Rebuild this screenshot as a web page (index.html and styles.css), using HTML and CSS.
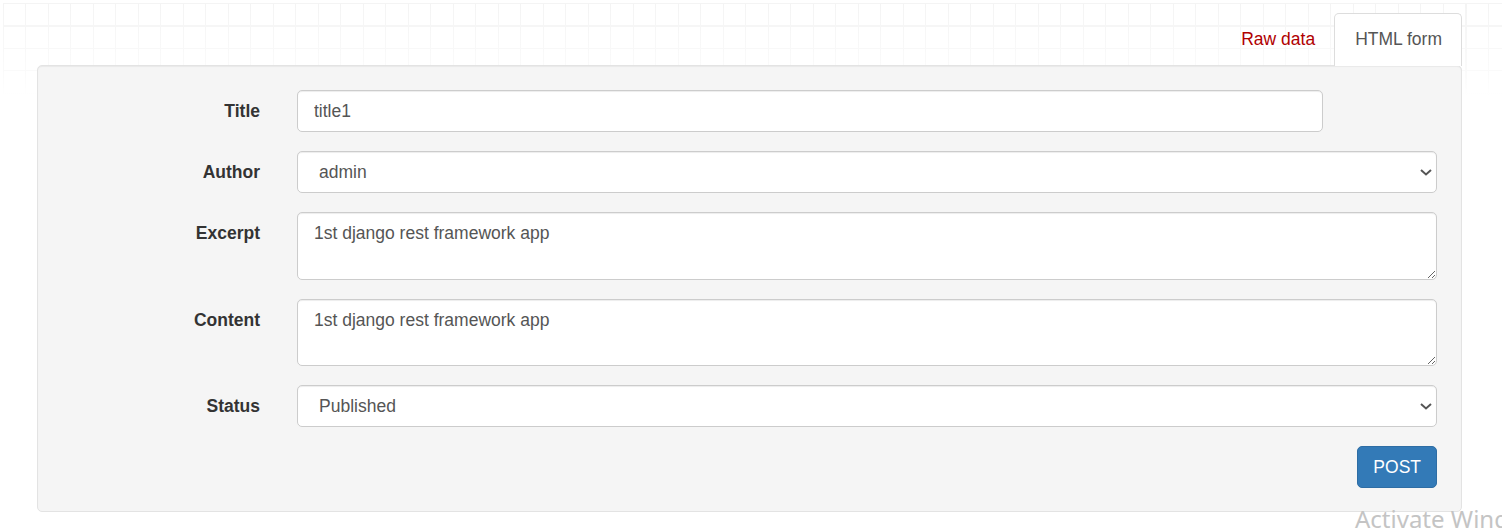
FILE: index.html
```html
<!DOCTYPE html>
<html lang="en">

<head>
  <meta charset="UTF-8">
  <meta name="viewport" content="width=device-width, initial-scale=1.0">
  <title>Post List – Django REST framework</title>
  <link rel="stylesheet" href="styles.css">
</head>

<body>
  <div class="page">
    <!-- Abas do formulário -->
    <ul class="tabs">
      <li class="tab tab-raw"><a href="#">Raw data</a></li>
      <li class="tab active"><a href="#">HTML form</a></li>
    </ul>

    <div class="well">
      <form class="form">
        <div class="form-row">
          <label for="title">Title</label>
          <div class="field">
            <input type="text" id="title" class="control control-short" value="title1">
          </div>
        </div>

        <div class="form-row">
          <label for="author">Author</label>
          <div class="field field-select">
            <select id="author" class="control">
              <option>admin</option>
            </select>
            <svg class="chevron" width="12" height="7" viewBox="0 0 12 7">
              <path d="M1 1 L6 5.5 L11 1" fill="none" stroke="#555" stroke-width="2" />
            </svg>
          </div>
        </div>

        <div class="form-row">
          <label for="excerpt">Excerpt</label>
          <div class="field">
            <textarea id="excerpt" class="control control-area">1st django rest framework app</textarea>
          </div>
        </div>

        <div class="form-row">
          <label for="content">Content</label>
          <div class="field">
            <textarea id="content" class="control control-area">1st django rest framework app</textarea>
          </div>
        </div>

        <div class="form-row">
          <label for="status">Status</label>
          <div class="field field-select">
            <select id="status" class="control">
              <option>Published</option>
              <option>Draft</option>
            </select>
            <svg class="chevron" width="12" height="7" viewBox="0 0 12 7">
              <path d="M1 1 L6 5.5 L11 1" fill="none" stroke="#555" stroke-width="2" />
            </svg>
          </div>
        </div>

        <div class="actions">
          <button type="button" class="btn-post">POST</button>
        </div>
      </form>
    </div>
  </div>

  <div class="watermark">Activate Windows</div>
</body>

</html>
```

FILE: styles.css
```css
/* Página base */
html,
body {
  height: 100%;
  overflow: hidden;
}

body {
  margin: 0;
  font-family: "Liberation Sans", Arial, sans-serif;
  font-size: 17.5px;
  line-height: 25px;
  color: #333;
  background-color: #fff;
  /* grade bem clarinha no topo, como o grid.png do DRF */
  background-image:
    linear-gradient(to bottom, rgba(255, 255, 255, 0) 0, rgba(255, 255, 255, 0.6) 70px, #fff 93px),
    repeating-linear-gradient(to right, #f4f4f4 0, #f4f4f4 1px, transparent 1px, transparent 22.5px),
    repeating-linear-gradient(to bottom, #f4f4f4 0, #f4f4f4 1px, transparent 1px, transparent 22.5px);
  background-size: 100% 93px;
  background-repeat: no-repeat;
  background-position: 3px 3px;
}

.page {
  padding: 13px 40px 0 37px;
}

/* Abas */
.tabs {
  display: flex;
  justify-content: flex-end;
  list-style: none;
  margin: 0 0 -1px;
  padding: 0;
}

.tab {
  position: relative;
  z-index: 1;
  margin-left: 2px;
}

.tab a {
  display: block;
  padding: 13px 19px 14px 20px;
  border: 1px solid transparent;
  border-bottom: none;
  border-radius: 5px 5px 0 0;
  color: #b00000;
  text-decoration: none;
}

.tab-raw a {
  padding-right: 16px;
}

.tab.active a {
  background-color: #fff;
  border-color: #ddd;
  color: #555;
}

/* Caixa cinza do formulário */
.well {
  background-color: #f5f5f5;
  border: 1px solid #e3e3e3;
  border-radius: 5px;
  box-shadow: inset 0 1px 1px rgba(0, 0, 0, 0.05);
  padding: 24px 24px 23px 0;
}

.form-row {
  display: grid;
  grid-template-columns: 222px 1fr;
  column-gap: 37px;
  margin-bottom: 19px;
}

.form-row label {
  text-align: right;
  font-weight: bold;
  padding-top: 9px;
}

.field-select {
  position: relative;
}

.control {
  display: block;
  box-sizing: border-box;
  width: 100%;
  height: 42px;
  padding: 7px 15px 7px 16px;
  font-family: inherit;
  font-size: 17.5px;
  line-height: 25px;
  color: #555;
  background-color: #fff;
  border: 1px solid #ccc;
  border-radius: 5px;
  box-shadow: inset 0 1px 1px rgba(0, 0, 0, 0.075);
  margin: 0;
}

select.control {
  appearance: none;
  -webkit-appearance: none;
  padding: 0 30px 0 21px;
}

.chevron {
  position: absolute;
  right: 5px;
  top: 18px;
  pointer-events: none;
}

.control-short {
  max-width: 1026px;
}

.control-area {
  height: 67.5px;
  padding-top: 8px;
  resize: vertical;
}

.actions {
  display: flex;
  justify-content: flex-end;
}

.btn-post {
  padding: 7px 15px;
  height: 42px;
  font-family: inherit;
  font-size: 17.5px;
  line-height: 25px;
  color: #fff;
  background-color: #337ab7;
  border: 1px solid #2e6da4;
  border-radius: 5px;
  cursor: pointer;
}

.btn-post:hover {
  background-color: #286090;
}

/* marca d'água do Windows no canto */
.watermark {
  position: absolute;
  left: 1355px;
  top: 503px;
  font-family: "Noto Sans", sans-serif;
  font-size: 24px;
  line-height: 32px;
  color: #c4c4c4;
  white-space: nowrap;
  pointer-events: none;
}
```
